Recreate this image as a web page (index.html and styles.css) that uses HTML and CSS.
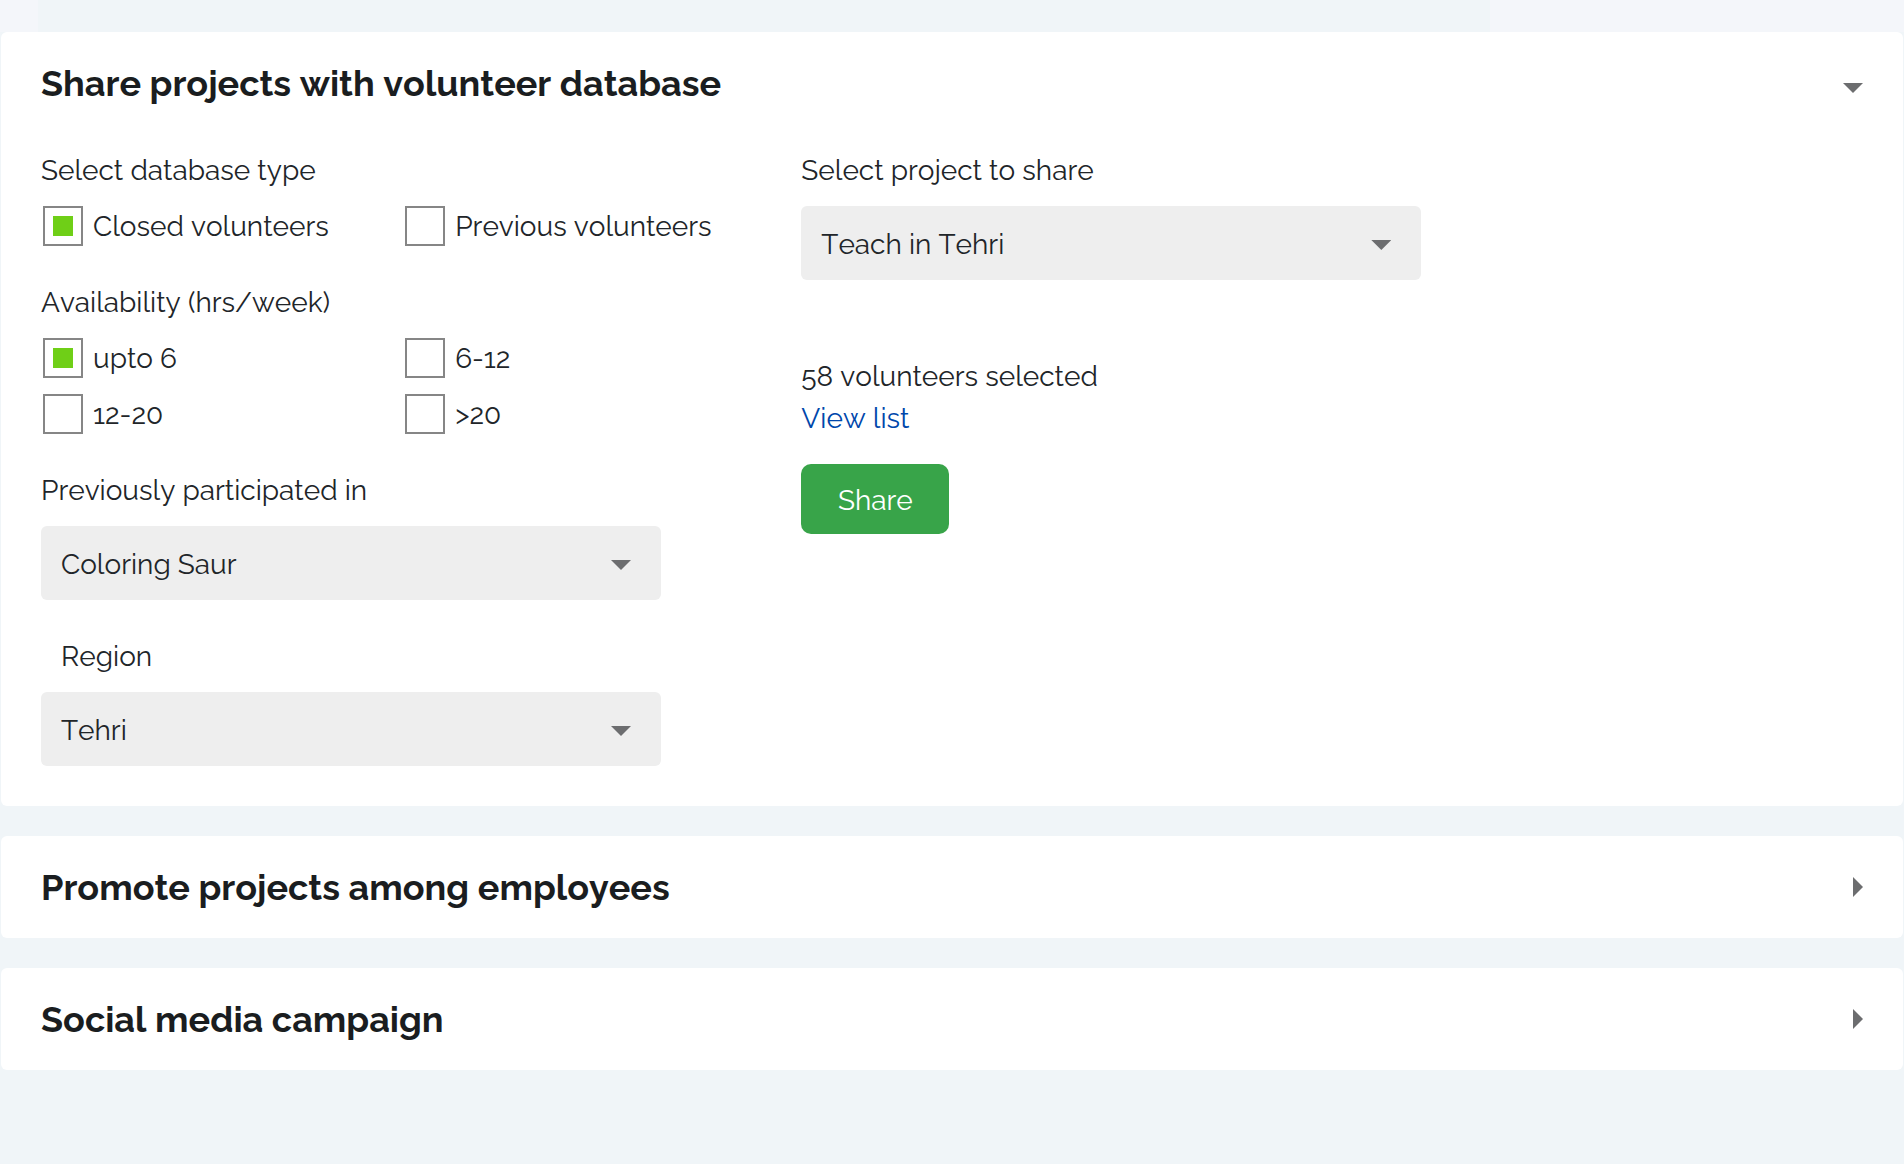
FILE: index.html
```html
<!DOCTYPE html>
<html lang="en">
<head>
<meta charset="utf-8">
<meta name="viewport" content="width=device-width, initial-scale=1">
<title>Share projects</title>
<link rel="stylesheet" href="styles.css">
</head>
<body>
<div class="top-strip"></div>
<main class="accordion">
  <section class="card">
    <h2 class="card-title">
      <button class="card-toggle" type="button" aria-expanded="true" aria-controls="share-panel">
        <span>Share projects with volunteer database</span>
        <svg class="arrow arrow-down" viewBox="0 0 20 10" aria-hidden="true"><path d="M0 0h20L10 10z"/></svg>
      </button>
    </h2>
    <form class="panel" id="share-panel">
      <div class="column">
        <fieldset class="group">
          <legend class="label">Select database type</legend>
          <div class="options">
            <label class="option"><input class="check" type="checkbox" checked>Closed volunteers</label>
            <label class="option"><input class="check" type="checkbox">Previous volunteers</label>
          </div>
        </fieldset>
        <fieldset class="group">
          <legend class="label">Availability (hrs/week)</legend>
          <div class="options">
            <label class="option"><input class="check" type="checkbox" checked>upto 6</label>
            <label class="option"><input class="check" type="checkbox">6-12</label>
            <label class="option"><input class="check" type="checkbox">12-20</label>
            <label class="option"><input class="check" type="checkbox">&gt;20</label>
          </div>
        </fieldset>
        <div class="group">
          <label class="label" for="participated">Previously participated in</label>
          <div class="select-box">
            <select class="select" id="participated"><option>Coloring Saur</option></select>
          </div>
        </div>
        <div class="group">
          <label class="label label-indented" for="region">Region</label>
          <div class="select-box">
            <select class="select" id="region"><option>Tehri</option></select>
          </div>
        </div>
      </div>
      <div class="column">
        <div class="group">
          <label class="label" for="project">Select project to share</label>
          <div class="select-box">
            <select class="select" id="project"><option>Teach in Tehri</option></select>
          </div>
        </div>
        <div class="summary">
          <p class="count">58 volunteers selected</p>
          <a class="link" href="#">View list</a>
          <button class="share" type="button">Share</button>
        </div>
      </div>
    </form>
  </section>
  <section class="card">
    <h2 class="card-title">
      <button class="card-toggle" type="button" aria-expanded="false">
        <span>Promote projects among employees</span>
        <svg class="arrow arrow-right" viewBox="0 0 10 20" aria-hidden="true"><path d="M0 0v20L10 10z"/></svg>
      </button>
    </h2>
  </section>
  <section class="card">
    <h2 class="card-title">
      <button class="card-toggle" type="button" aria-expanded="false">
        <span>Social media campaign</span>
        <svg class="arrow arrow-right" viewBox="0 0 10 20" aria-hidden="true"><path d="M0 0v20L10 10z"/></svg>
      </button>
    </h2>
  </section>
</main>
</body>
</html>
```
FILE: styles.css
```css
* {
  box-sizing: border-box;
}

body {
  margin: 0;
  background: #f0f5f8;
  color: #212529;
  font: 28px/42px Raleway, Lato, sans-serif;
  font-kerning: none;
}

button,
select {
  font: inherit;
  font-kerning: none;
  color: inherit;
}

.top-strip {
  height: 32px;
  background: linear-gradient(to right, #f4f6fa 38px, #f0f5f8 38px calc(100% - 414px), #f4f6fa calc(100% - 414px));
}

.accordion {
  display: flex;
  flex-direction: column;
  gap: 30px;
  padding: 0 1px 40px;
}

.card {
  background: #fff;
  border-radius: 6px;
}

.card-title {
  margin: 0;
  font-size: 36px;
  font-weight: 700;
  color: #1a1d20;
}

.card-toggle {
  display: flex;
  align-items: center;
  justify-content: space-between;
  width: 100%;
  padding: 30px 40px;
  border: 0;
  background: none;
  text-align: left;
  cursor: pointer;
}

.arrow {
  fill: #6c6d6f;
}

.arrow-down {
  width: 20px;
  height: 10px;
  margin-top: 10px;
}

.arrow-right {
  width: 10px;
  height: 20px;
}

.panel {
  display: grid;
  grid-template-columns: 5fr 7fr;
  column-gap: 2px;
  padding: 16px 40px 40px;
}

.column {
  display: flex;
  flex-direction: column;
  gap: 36px;
}

.group {
  min-width: 0;
  margin: 0;
  padding: 0;
  border: 0;
}

.label {
  display: block;
  margin-bottom: 14px;
  padding: 0;
}

.label-indented {
  padding-left: 20px;
}

.options {
  display: grid;
  grid-template-columns: repeat(2, 1fr);
  gap: 16px 0;
  padding: 0 32px 0 2px;
}

.option {
  display: flex;
  align-items: flex-start;
  gap: 10px;
  height: 40px;
  white-space: nowrap;
}

.check {
  appearance: none;
  flex: none;
  width: 40px;
  height: 40px;
  margin: 0;
  border: 2px solid #868686;
  background: #fff;
}

.check:checked {
  padding: 8px;
  background: #6fcf17 content-box;
}

.select-box {
  display: grid;
  align-items: center;
  max-width: 620px;
}

.select-box::after {
  content: "";
  grid-area: 1 / 1;
  justify-self: end;
  width: 20px;
  height: 10px;
  margin: 4px 30px 0 0;
  background: #6c6d6f;
  clip-path: polygon(0 0, 100% 0, 50% 100%);
  pointer-events: none;
}

.select {
  appearance: none;
  grid-area: 1 / 1;
  width: 100%;
  height: 74px;
  padding: 4px 60px 0 20px;
  border: 0;
  border-radius: 6px;
  background: #eee;
}

.summary {
  display: flex;
  flex-direction: column;
  align-items: flex-start;
  padding-top: 40px;
}

.count {
  margin: 0;
}

.link {
  color: #0047ab;
  text-decoration: none;
}

.share {
  min-width: 148px;
  height: 70px;
  margin-top: 24px;
  padding: 4px 24px 0;
  border: 0;
  border-radius: 10px;
  background: #38a449;
  color: #fff;
  cursor: pointer;
}
```
